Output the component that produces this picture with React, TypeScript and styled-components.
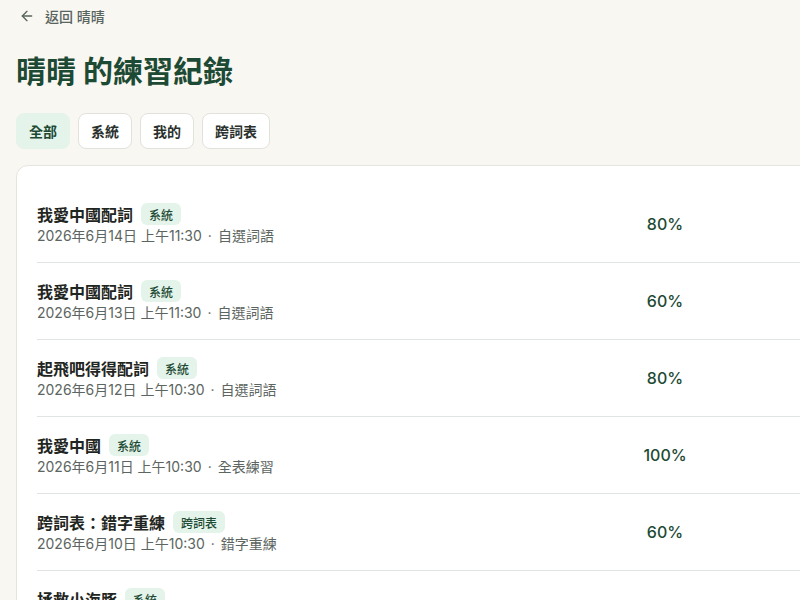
import React, { useState } from "react";
import styled, { createGlobalStyle } from "styled-components";
import { ArrowLeft } from "lucide-react";

const GlobalStyle = createGlobalStyle`
  html, body {
    margin: 0;
    padding: 0;
    background: #f9f7f2;
    overflow: hidden;
  }
  body {
    font-family: "Inter", "Noto Sans CJK TC", "Noto Sans", sans-serif;
    color: #1f2a25;
  }
  * { box-sizing: border-box; }
`;

const Page = styled.div`
  min-height: 600px;
  padding: 6px 16px 40px;
  overflow: hidden;
`;

const BackLink = styled.button`
  display: inline-flex;
  align-items: center;
  gap: 10px;
  height: 20px;
  padding: 0 3px;
  border: none;
  background: transparent;
  font-family: inherit;
  font-size: 14px;
  font-weight: 500;
  color: #58645e;
  cursor: pointer;
`;

const Title = styled.h1`
  margin: 24px 0 0;
  font-size: 30px;
  line-height: 39px;
  font-weight: 700;
  color: #1d4a34;
`;

const Tabs = styled.div`
  display: flex;
  gap: 8px;
  margin-top: 22px;
`;

const Tab = styled.button<{ $active?: boolean }>`
  height: 36px;
  padding: 0 12px;
  border-radius: 8px;
  border: 1px solid ${(p) => (p.$active ? "#e4f4ea" : "#e3e1dc")};
  background: ${(p) => (p.$active ? "#e4f4ea" : "#ffffff")};
  font-family: inherit;
  font-size: 14px;
  font-weight: 600;
  color: ${(p) => (p.$active ? "#1d4a34" : "#2a312d")};
  cursor: pointer;
`;

const Card = styled.div`
  margin-top: 16px;
  width: 890px;
  background: #ffffff;
  border: 1px solid #e6e4df;
  border-radius: 12px;
  padding: 20px;
`;

const Row = styled.div`
  display: grid;
  grid-template-columns: 1fr 120px 160px;
  align-items: center;
  padding: 16px 0;
  border-bottom: 1px solid #e1e5e2;
`;

const Info = styled.div`
  display: flex;
  flex-direction: column;
`;

const NameLine = styled.div`
  display: flex;
  align-items: center;
  gap: 8px;
  height: 24px;
`;

const Name = styled.span`
  font-size: 16px;
  font-weight: 700;
  color: #1f2622;
`;

const Badge = styled.span`
  display: inline-flex;
  align-items: center;
  height: 22px;
  padding: 0 8px;
  border-radius: 6px;
  background: #e4f4ea;
  color: #1d4a34;
  font-size: 12px;
  font-weight: 500;
`;

const Meta = styled.div`
  display: flex;
  align-items: center;
  height: 20px;
  line-height: 20px;
  font-size: 14px;
  color: #5c6560;
`;

const Dot = styled.span`
  margin: 0 6px;
`;

const Score = styled.div`
  text-align: center;
  font-size: 16px;
  font-weight: 500;
  color: #1d4a34;
`;

type Record = {
  name: string;
  tag: string;
  date: string;
  mode: string;
  score: number;
};

const records: Record[] = [
  { name: "我愛中國配詞", tag: "系統", date: "2026年6月14日 上午11:30", mode: "自選詞語", score: 80 },
  { name: "我愛中國配詞", tag: "系統", date: "2026年6月13日 上午11:30", mode: "自選詞語", score: 60 },
  { name: "起飛吧得得配詞", tag: "系統", date: "2026年6月12日 上午10:30", mode: "自選詞語", score: 80 },
  { name: "我愛中國", tag: "系統", date: "2026年6月11日 上午10:30", mode: "全表練習", score: 100 },
  { name: "跨詞表：錯字重練", tag: "跨詞表", date: "2026年6月10日 上午10:30", mode: "錯字重練", score: 60 },
  { name: "拯救小海豚", tag: "系統", date: "2026年6月9日 上午10:30", mode: "自選詞語", score: 80 },
];

const filters = ["全部", "系統", "我的", "跨詞表"];

export default function App() {
  const [filter, setFilter] = useState("全部");
  const shown = records.filter((r) => filter === "全部" || r.tag === filter);

  return (
    <>
      <GlobalStyle />
      <Page>
        <BackLink>
          <ArrowLeft size={16} strokeWidth={2} />
          返回 晴晴
        </BackLink>
        <Title>晴晴 的練習紀錄</Title>
        <Tabs>
          {filters.map((f) => (
            <Tab key={f} $active={f === filter} onClick={() => setFilter(f)}>
              {f}
            </Tab>
          ))}
        </Tabs>
        <Card>
          {shown.map((r, i) => (
            <Row key={i}>
              <Info>
                <NameLine>
                  <Name>{r.name}</Name>
                  <Badge>{r.tag}</Badge>
                </NameLine>
                <Meta>
                  <span>{r.date}</span>
                  <Dot>·</Dot>
                  <span>{r.mode}</span>
                </Meta>
              </Info>
              <Score>{r.score}%</Score>
              <div />
            </Row>
          ))}
        </Card>
      </Page>
    </>
  );
}
